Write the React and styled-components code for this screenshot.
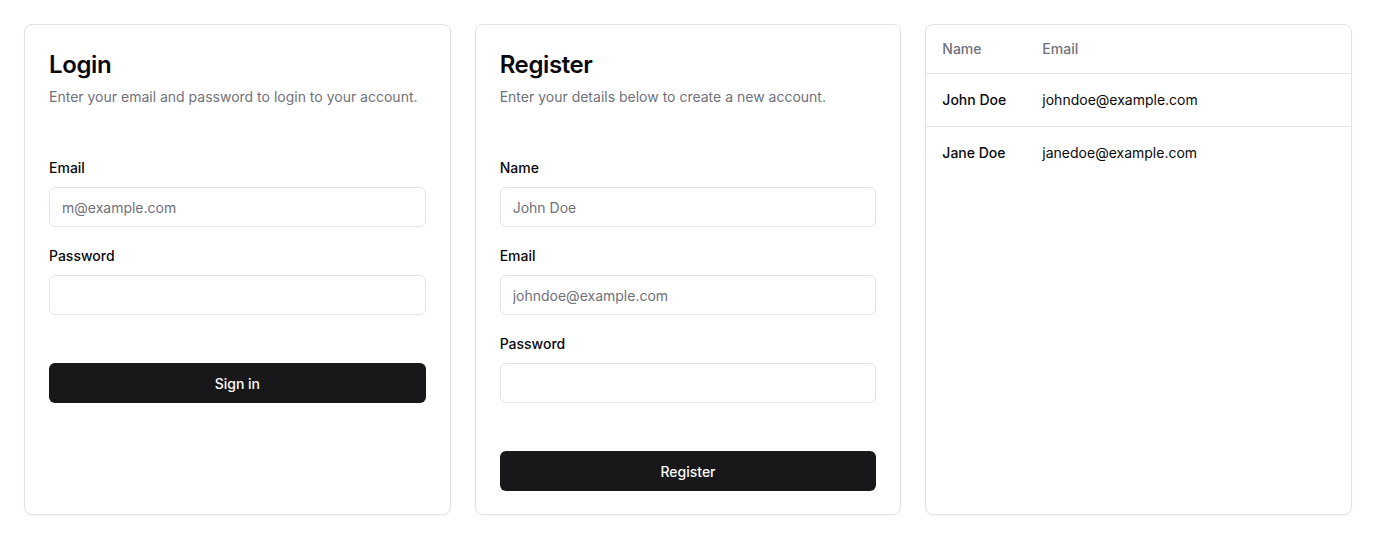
import React from "react";
import styled, { createGlobalStyle } from "styled-components";

const GlobalStyle = createGlobalStyle`
  * { box-sizing: border-box; }
  body {
    margin: 0;
    background: #ffffff;
    font-family: "Inter", "Liberation Sans", sans-serif;
    color: #09090b;
    -webkit-font-smoothing: antialiased;
  }
`;

const Page = styled.div`
  display: grid;
  grid-template-columns: repeat(3, 1fr);
  gap: 24px;
  padding: 24px;
  align-items: stretch;
`;

const Card = styled.div`
  border: 1px solid #e4e4e7;
  border-radius: 8px;
  background: #ffffff;
  box-shadow: 0 1px 2px rgba(0, 0, 0, 0.04);
  padding: ${props => (props.flush ? "0" : "24px 24px 23px")};
  display: flex;
  flex-direction: column;
  overflow: hidden;
`;

const Header = styled.div`
  display: flex;
  flex-direction: column;
  gap: 6px;
  margin-bottom: 51px;
`;

const Title = styled.h2`
  margin: 0;
  font-size: 24px;
  line-height: 32px;
  font-weight: 600;
  letter-spacing: -0.4px;
`;

const Description = styled.p`
  margin: 0;
  font-size: 14px;
  line-height: 20px;
  color: #71717a;
`;

const Form = styled.form`
  display: flex;
  flex-direction: column;
  gap: 19px;
`;

const Field = styled.div`
  display: flex;
  flex-direction: column;
  gap: 9px;
`;

const Label = styled.label`
  font-size: 14px;
  line-height: 20px;
  font-weight: 500;
`;

const Input = styled.input`
  height: 40px;
  width: 100%;
  border: 1px solid #e4e4e7;
  border-radius: 6px;
  padding: 0 12px;
  font-family: inherit;
  font-size: 14px;
  color: #09090b;
  background: #ffffff;
  outline: none;
  &::placeholder {
    color: #71717a;
  }
`;

const Button = styled.button`
  margin-top: 29px;
  height: 40px;
  width: 100%;
  border: none;
  border-radius: 6px;
  background: #18181b;
  color: #fafafa;
  font-family: inherit;
  font-size: 14px;
  font-weight: 500;
  cursor: pointer;
`;

const Table = styled.table`
  width: 100%;
  border-collapse: collapse;
  font-size: 14px;
`;

const Th = styled.th`
  height: 48px;
  padding: 0 16px;
  text-align: left;
  font-weight: 500;
  color: #71717a;
  width: ${props => props.width || "auto"};
`;

const Row = styled.tr`
  border-bottom: 1px solid #e4e4e7;
  tbody &:last-child {
    border-bottom: none;
  }
`;

const Td = styled.td`
  padding: 16px;
  line-height: 20px;
  font-weight: ${props => (props.strong ? 500 : 400)};
`;

const users = [
  { name: "John Doe", email: "johndoe@example.com" },
  { name: "Jane Doe", email: "janedoe@example.com" }
];

export default function App() {
  return (
    <>
      <GlobalStyle />
      <Page>
        <Card>
          <Header>
            <Title>Login</Title>
            <Description>
              Enter your email and password to login to your account.
            </Description>
          </Header>
          <Form onSubmit={e => e.preventDefault()}>
            <Field>
              <Label>Email</Label>
              <Input type="email" placeholder="m@example.com" />
            </Field>
            <Field>
              <Label>Password</Label>
              <Input type="password" />
            </Field>
            <Button type="submit">Sign in</Button>
          </Form>
        </Card>

        <Card>
          <Header>
            <Title>Register</Title>
            <Description>
              Enter your details below to create a new account.
            </Description>
          </Header>
          <Form onSubmit={e => e.preventDefault()}>
            <Field>
              <Label>Name</Label>
              <Input type="text" placeholder="John Doe" />
            </Field>
            <Field>
              <Label>Email</Label>
              <Input type="email" placeholder="johndoe@example.com" />
            </Field>
            <Field>
              <Label>Password</Label>
              <Input type="password" />
            </Field>
            <Button type="submit">Register</Button>
          </Form>
        </Card>

        <Card flush>
          <Table>
            <thead>
              <Row>
                <Th width="100px">Name</Th>
                <Th>Email</Th>
              </Row>
            </thead>
            <tbody>
              {users.map(u => (
                <Row key={u.email}>
                  <Td strong>{u.name}</Td>
                  <Td>{u.email}</Td>
                </Row>
              ))}
            </tbody>
          </Table>
        </Card>
      </Page>
    </>
  );
}
